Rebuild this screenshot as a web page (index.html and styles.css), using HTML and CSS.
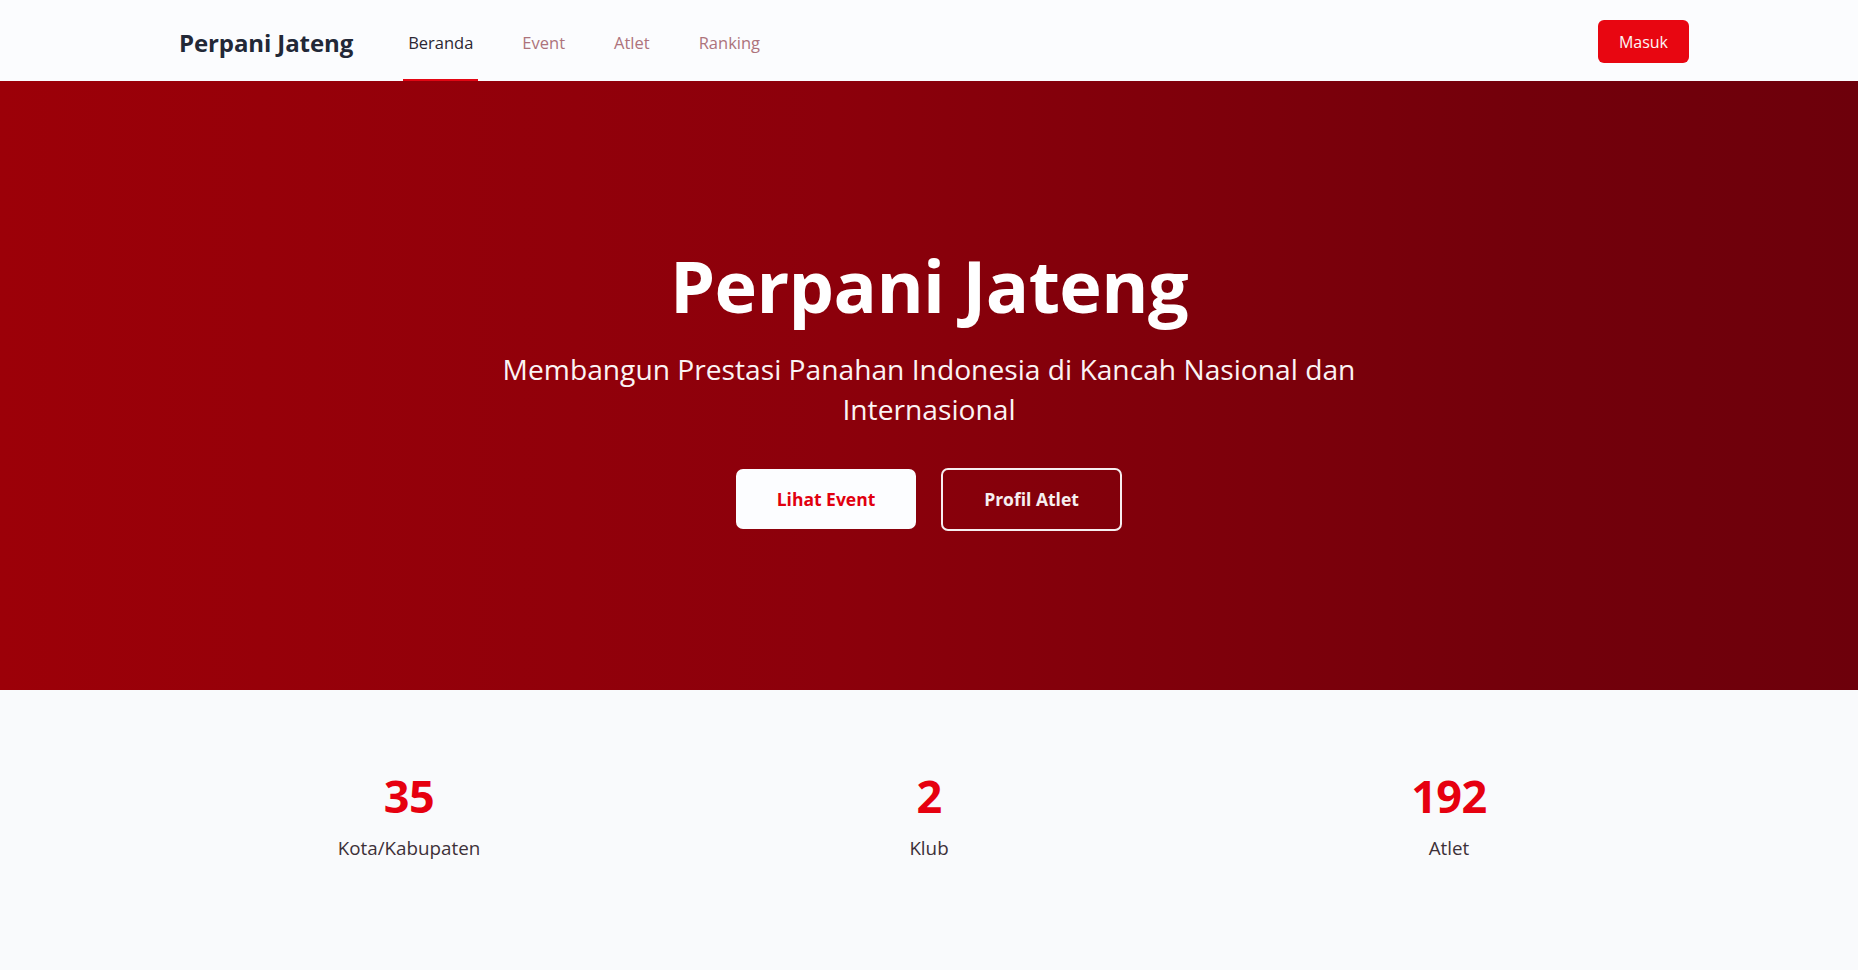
FILE: index.html
```html
<!DOCTYPE html>
<html lang="id">
<head>
<meta charset="utf-8">
<title>Perpani Jateng</title>
<link rel="stylesheet" href="styles.css">
</head>
<body>
<header class="topbar">
  <div class="topbar-inner">
    <a class="brand" href="#">Perpani Jateng</a>
    <nav class="nav">
      <a class="nav-link active" href="#">Beranda</a>
      <a class="nav-link" href="#">Event</a>
      <a class="nav-link" href="#">Atlet</a>
      <a class="nav-link" href="#">Ranking</a>
    </nav>
    <a class="btn-login" href="#">Masuk</a>
  </div>
</header>

<section class="hero">
  <h1 class="hero-title">Perpani Jateng</h1>
  <p class="hero-sub">Membangun Prestasi Panahan Indonesia di Kancah Nasional dan Internasional</p>
  <div class="hero-actions">
    <a class="btn btn-light" href="#">Lihat Event</a>
    <a class="btn btn-outline" href="#">Profil Atlet</a>
  </div>
</section>

<section class="stats">
  <div class="stat">
    <div class="stat-num">35</div>
    <div class="stat-label">Kota/Kabupaten</div>
  </div>
  <div class="stat">
    <div class="stat-num">2</div>
    <div class="stat-label">Klub</div>
  </div>
  <div class="stat">
    <div class="stat-num">192</div>
    <div class="stat-label">Atlet</div>
  </div>
</section>
</body>
</html>
```

FILE: styles.css
```css
* { box-sizing: border-box; }

html, body {
  margin: 0;
  padding: 0;
}

body {
  font-family: "Open Sans", "Noto Sans", "Liberation Sans", sans-serif;
  background: #f9fafc;
  color: #222837;
  min-height: 970px;
}

a { text-decoration: none; }

/* Header */
.topbar {
  height: 81px;
  background: #fbfcfe;
}

.topbar-inner {
  max-width: 1520px;
  height: 100%;
  margin: 0 auto;
  padding-left: 10px;
  display: flex;
  align-items: stretch;
}

.brand {
  display: flex;
  align-items: center;
  font-size: 24px;
  font-weight: 700;
  color: #222837;
  letter-spacing: -0.1px;
  padding-top: 4px;
}

.nav {
  display: flex;
  align-items: stretch;
  gap: 39px;
  margin-left: 50px;
}

.nav-link {
  display: flex;
  align-items: center;
  padding: 5px 5px 0;
  font-size: 16.5px;
  color: #ad737b;
  border-bottom: 2px solid transparent;
}

.nav-link.active {
  color: #2b2733;
  border-bottom-color: #e30613;
}

.btn-login {
  margin-left: auto;
  align-self: center;
  height: 43px;
  padding: 0 21px;
  display: flex;
  align-items: center;
  background: #e80611;
  color: #fdf5f6;
  font-size: 16px;
  border-radius: 6px;
  margin-top: 2px;
}

/* Hero */
.hero {
  height: 609px;
  background: linear-gradient(to right, #9c0008 0%, #8c000b 45%, #73000b 82%, #6d000b 100%);
  color: #ffffff;
  display: flex;
  flex-direction: column;
  align-items: center;
  justify-content: center;
  text-align: center;
  padding-top: 9px;
}

.hero-title {
  margin: 0;
  font-size: 72px;
  line-height: 70px;
  font-weight: 700;
  letter-spacing: -0.6px;
}

.hero-sub {
  margin: 29px 0 0;
  max-width: 940px;
  font-size: 28.2px;
  line-height: 40px;
  font-weight: 400;
  color: #fbf3f4;
}

.hero-actions {
  margin-top: 39px;
  display: flex;
  align-items: center;
  gap: 25px;
}

.btn {
  display: flex;
  align-items: center;
  justify-content: center;
  font-size: 17.5px;
  font-weight: 700;
  line-height: 28px;
  border-radius: 7px;
}

.btn-light {
  width: 180px;
  height: 60px;
  background: #fcfdff;
  color: #e1000f;
}

.btn-outline {
  width: 181px;
  height: 63px;
  border: 2px solid #f6eef0;
  color: #f6eef0;
}

/* Stats */
.stats {
  max-width: 1517px;
  margin: 0 auto;
  padding-top: 82px;
  display: grid;
  grid-template-columns: repeat(3, 1fr);
  gap: 43px;
  text-align: center;
}

.stat-num {
  font-size: 45px;
  line-height: 47px;
  font-weight: 700;
  color: #e6000f;
  letter-spacing: -0.5px;
}

.stat-label {
  margin-top: 15px;
  font-size: 18.8px;
  line-height: 28px;
  color: #3d3038;
}
```
